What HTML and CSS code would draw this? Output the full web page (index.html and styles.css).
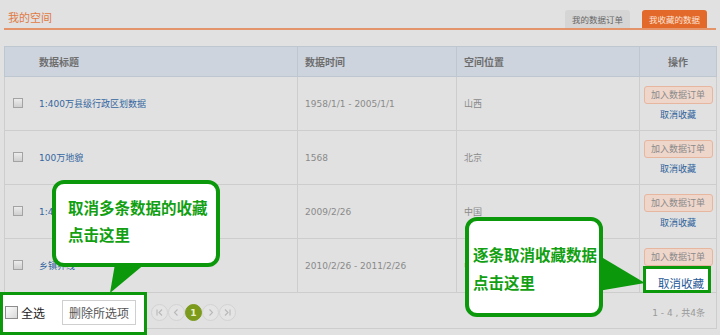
FILE: index.html
```html
<!DOCTYPE html>
<html lang="zh-CN">
<head>
    <meta charset="UTF-8">
    <meta name="viewport" content="width=device-width, initial-scale=1.0">
    <link rel="stylesheet" href="styles.css">
</head>
<body>

<div class="page">
    <div class="space-head">
        <h2>我的空间</h2>
        <div class="tabs">
            <a class="tab">我的数据订单</a>
            <a class="tab active">我收藏的数据</a>
        </div>
    </div>

    <table class="fav-table">
        <colgroup>
            <col class="col-title">
            <col class="col-time">
            <col class="col-place">
            <col class="col-op">
        </colgroup>
        <thead>
            <tr>
                <th class="th-title">数据标题</th>
                <th>数据时间</th>
                <th>空间位置</th>
                <th class="th-op">操作</th>
            </tr>
        </thead>
        <tbody>
            <tr>
                <td class="td-title"><span class="check"></span><a class="data-link">1:400万县级行政区划数据</a></td>
                <td>1958/1/1 - 2005/1/1</td>
                <td>山西</td>
                <td class="td-op"><span class="btn-order">加入数据订单</span><a class="unfav">取消收藏</a></td>
            </tr>
            <tr>
                <td class="td-title"><span class="check"></span><a class="data-link">100万地貌</a></td>
                <td>1568</td>
                <td>北京</td>
                <td class="td-op"><span class="btn-order">加入数据订单</span><a class="unfav">取消收藏</a></td>
            </tr>
            <tr>
                <td class="td-title"><span class="check"></span><a class="data-link">1:400万地级行政区划数据</a></td>
                <td>2009/2/26</td>
                <td>中国</td>
                <td class="td-op"><span class="btn-order">加入数据订单</span><a class="unfav">取消收藏</a></td>
            </tr>
            <tr>
                <td class="td-title"><span class="check"></span><a class="data-link">乡镇界线</a></td>
                <td>2010/2/26 - 2011/2/26</td>
                <td>中国</td>
                <td class="td-op"><span class="btn-order">加入数据订单</span><span class="unfav-slot"></span></td>
            </tr>
        </tbody>
        <tfoot>
            <tr>
                <td colspan="4">
                    <div class="foot-bar">
                        <div class="pager">
                            <span class="pg">
                                <svg width="9" height="9" viewBox="0 0 9 9"><path d="M2 1.5v6M7 1.5L4 4.5l3 3" fill="none" stroke="#b8b8b8" stroke-width="1.1"/></svg>
                            </span>
                            <span class="pg">
                                <svg width="9" height="9" viewBox="0 0 9 9"><path d="M5.5 1.5L2.5 4.5l3 3" fill="none" stroke="#b8b8b8" stroke-width="1.1"/></svg>
                            </span>
                            <span class="pg current">1</span>
                            <span class="pg">
                                <svg width="9" height="9" viewBox="0 0 9 9"><path d="M3.5 1.5l3 3-3 3" fill="none" stroke="#b8b8b8" stroke-width="1.1"/></svg>
                            </span>
                            <span class="pg">
                                <svg width="9" height="9" viewBox="0 0 9 9"><path d="M2 1.5l3 3-3 3M7 1.5v6" fill="none" stroke="#b8b8b8" stroke-width="1.1"/></svg>
                            </span>
                        </div>
                        <span class="count">1 - 4 , 共4条</span>
                    </div>
                </td>
            </tr>
        </tfoot>
    </table>

    <!-- guide overlay -->
    <svg class="tails" width="720" height="335" viewBox="0 0 720 335">
        <polygon points="116,258 152,258 110,293" fill="#0b990b"/>
        <polygon points="598,255 598,291 645,283" fill="#0b990b"/>
    </svg>

    <div class="tip tip-multi">取消多条数据的收藏<br>点击这里</div>
    <div class="tip tip-single">逐条取消收藏数据<br>点击这里</div>

    <div class="spot spot-select">
        <span class="check-all"></span>
        <span class="all-label">全选</span>
        <span class="btn-delete">删除所选项</span>
    </div>
    <div class="spot spot-unfav">
        <a class="unfav-big">取消收藏</a>
    </div>
</div>

</body>
</html>
```

FILE: styles.css
```css
body {
    margin: 0;
    background-color: #e1e1e1;
    font-family: "DejaVu Sans", "Noto Sans CJK SC", sans-serif;
}

.page {
    position: relative;
    width: 720px;
    height: 335px;
    overflow: hidden;
}

.space-head {
    display: flex;
    align-items: flex-end;
    justify-content: space-between;
    height: 28px;
    margin: 0 4px;
    border-bottom: 2px solid #e3946a;
}

.space-head h2 {
    margin: 0 0 3px 4px;
    font-family: "Noto Sans CJK SC", sans-serif;
    font-size: 11px;
    font-weight: normal;
    line-height: 16px;
    color: #e07a44;
}

.tabs {
    display: flex;
    gap: 12px;
    margin-right: 9px;
}

.tab {
    width: 65px;
    height: 18px;
    line-height: 18px;
    text-align: center;
    font-family: "Noto Sans CJK SC", sans-serif;
    font-size: 8.5px;
    color: #666;
    background-color: #d5d5d5;
    border-radius: 3px 3px 0 0;
}

.tab.active {
    background-color: #e2692a;
    color: #fbe3d6;
}

.fav-table {
    width: 712px;
    margin: 16px 0 0 4px;
    border-collapse: collapse;
    table-layout: fixed;
    border: 1px solid #cbcbcb;
    font-size: 9px;
    color: #8a8a8a;
}

.col-title { width: 293px; }
.col-time { width: 159px; }
.col-place { width: 183px; }
.col-op { width: 77px; }

.fav-table thead tr {
    height: 30px;
    background-color: #cdd4de;
}

.fav-table th {
    text-align: left;
    padding: 0 0 0 7px;
    font-size: 10px;
    font-weight: bold;
    color: #6e6e6e;
    border: 1px solid #bec6d0;
}

.fav-table th.th-title {
    padding-left: 34px;
}

.fav-table th.th-op {
    text-align: center;
    padding: 0;
}

.fav-table tbody tr {
    height: 54px;
}

.fav-table td {
    padding: 0 0 0 7px;
    border: 1px solid #cdcdcd;
    vertical-align: middle;
    white-space: nowrap;
}

.fav-table td.td-title {
    padding-left: 8px;
}

.check {
    display: inline-block;
    width: 8px;
    height: 8px;
    margin-right: 16px;
    vertical-align: -1px;
    border: 1px solid #a3a3a3;
    background: linear-gradient(#ececec, #cfcfcf);
}

.data-link {
    color: #3466a0;
}

.td-op {
    text-align: center;
}

.fav-table td.td-op {
    padding: 0;
}

.btn-order {
    display: block;
    width: 67px;
    height: 16px;
    line-height: 16px;
    margin: 0 auto 4px;
    font-family: "Noto Sans CJK SC", sans-serif;
    color: #8a8a8a;
    background-color: #efd6cb;
    border: 1px solid #e6b69f;
    border-radius: 3px;
}

.unfav {
    display: block;
    line-height: 13px;
    font-family: "Noto Sans CJK SC", sans-serif;
    color: #2e629b;
}

.unfav-slot {
    display: block;
    height: 13px;
}

.fav-table tfoot tr {
    height: 36px;
}

.fav-table tfoot td {
    padding: 4px 11px 0 146px;
}

.foot-bar {
    display: flex;
    align-items: center;
    justify-content: space-between;
}

.pager {
    display: flex;
}

.pg {
    display: flex;
    align-items: center;
    justify-content: center;
    width: 15px;
    height: 15px;
    border: 1px solid #d3d3d3;
    border-radius: 50%;
    background-color: #e4e4e4;
    font-size: 9px;
    font-weight: bold;
}

.pg.current {
    background-color: #7c9b1d;
    border-color: #7c9b1d;
    color: #e8f0c6;
}

.count {
    font-family: "DejaVu Sans", "Noto Sans CJK SC", sans-serif;
    font-size: 9px;
    color: #999;
}

/* guide overlay */
.tails {
    position: absolute;
    left: 0;
    top: 0;
}

.tip {
    position: absolute;
    box-sizing: border-box;
    border: 4px solid #0b990b;
    border-radius: 12px;
    background-color: #fff;
    font-family: "Noto Sans CJK SC", sans-serif;
    font-size: 15.5px;
    font-weight: bold;
    line-height: 27px;
    color: #12a012;
}

.tip-multi {
    left: 52px;
    top: 180px;
    width: 168px;
    height: 87px;
    padding: 10px 0 0 12px;
}

.tip-single {
    left: 465px;
    top: 217px;
    width: 138px;
    height: 100px;
    padding: 19px 0 0 4px;
    line-height: 28px;
}

.spot {
    position: absolute;
    box-sizing: border-box;
    border: 3px solid #0b990b;
    background-color: #fff;
    font-family: "Noto Sans CJK SC", sans-serif;
}

.spot-select {
    left: 0;
    top: 292px;
    width: 147px;
    height: 43px;
    display: flex;
    align-items: center;
    padding: 0 0 2px 2px;
}

.check-all {
    width: 11px;
    height: 11px;
    border: 1px solid #8c8c8c;
    background: linear-gradient(135deg, #fdfdfd, #d9d9d9);
}

.all-label {
    margin: 0 17px 0 3px;
    font-size: 12px;
    color: #222;
}

.btn-delete {
    padding: 0 6px;
    height: 23px;
    line-height: 23px;
    border: 1px solid #cfcfcf;
    font-size: 12px;
    color: #555;
}

.spot-unfav {
    left: 643px;
    top: 266px;
    width: 68px;
    height: 27px;
    text-align: right;
    padding-right: 4px;
}

.unfav-big {
    font-size: 11.5px;
    line-height: 21px;
    color: #1f5896;
}
```
